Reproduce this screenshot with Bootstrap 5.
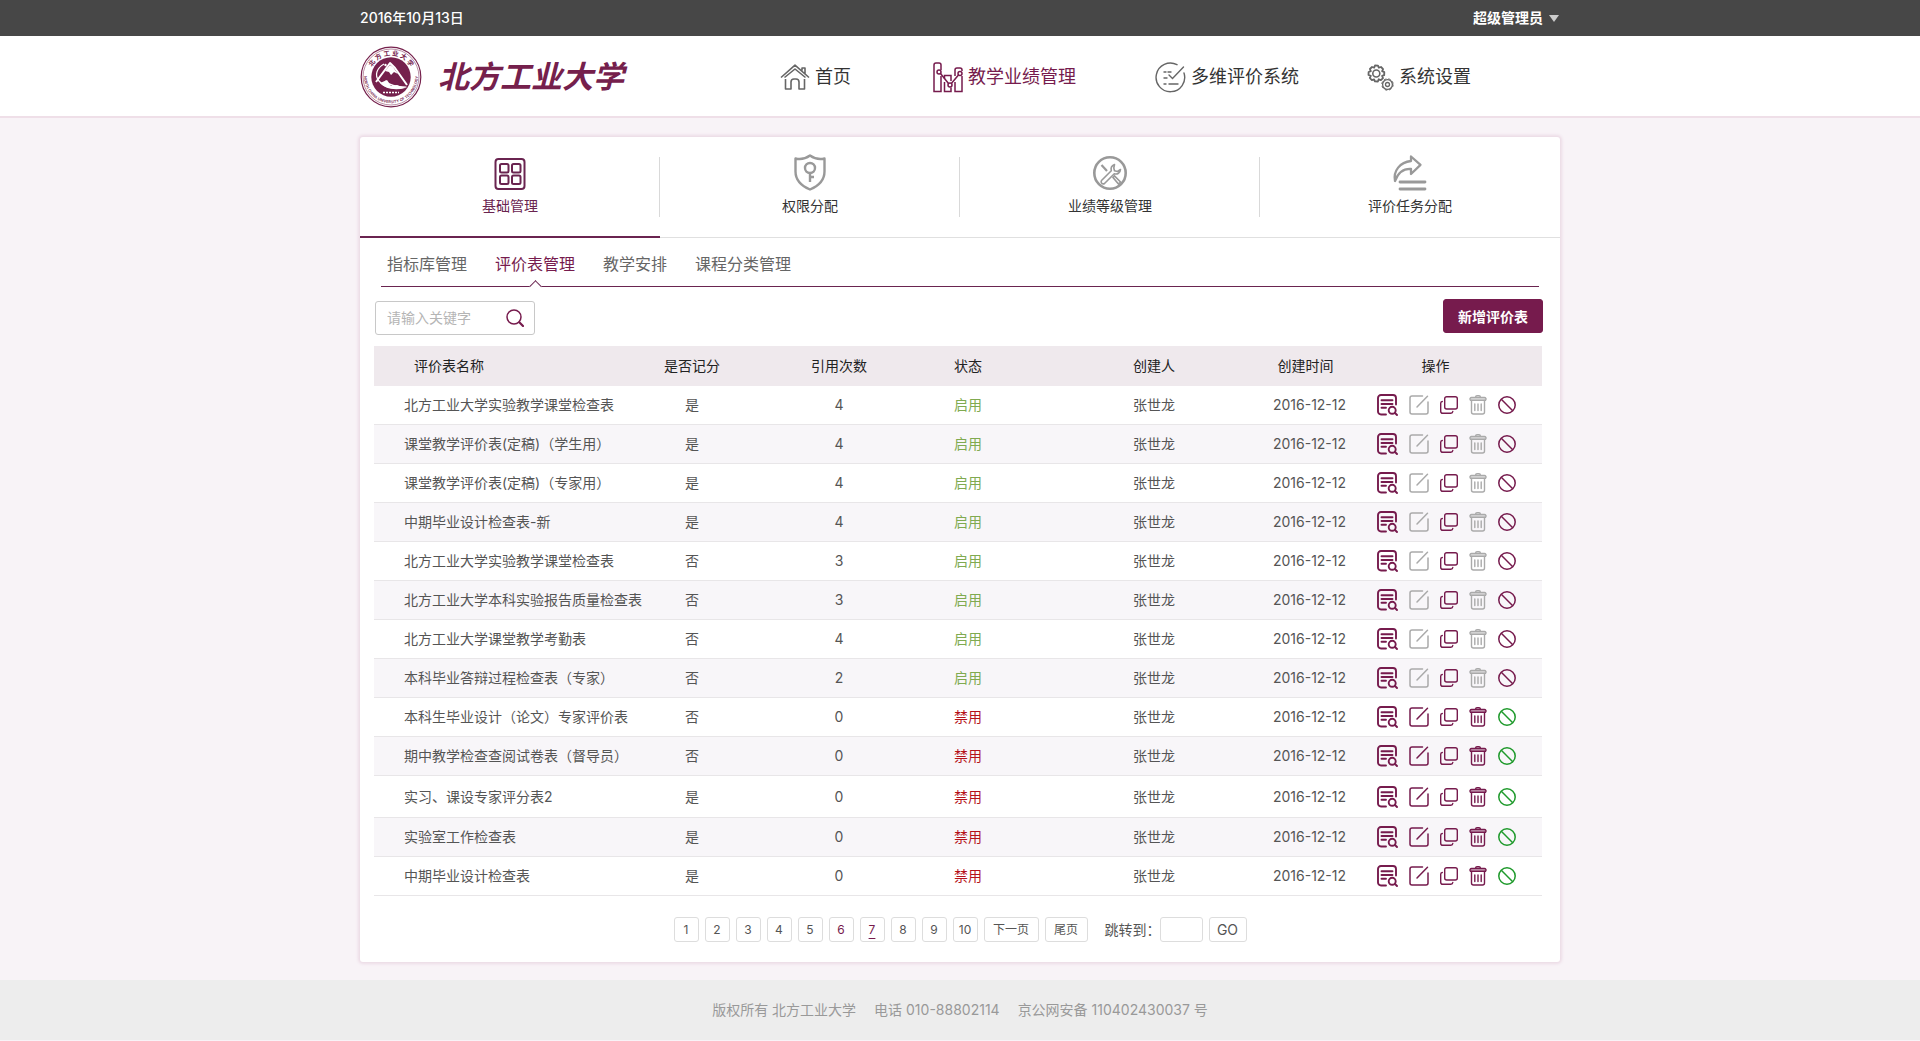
<!DOCTYPE html>
<html lang="zh-CN">
<head>
<meta charset="utf-8">
<meta name="viewport" content="width=device-width, initial-scale=1">
<title>北方工业大学 - 评价表管理</title>
<link rel="stylesheet" href="https://cdn.jsdelivr.net/npm/bootstrap@5.3.0/dist/css/bootstrap.min.css">
<style>
:root{--plum:#761b4d;--plum-dark:#6a2450}
body{font-family:Inter,"Noto Sans CJK SC",sans-serif;font-size:14px;line-height:20px;color:#555;background:#f8f3f7}
a{color:inherit;text-decoration:none}
svg{display:block;flex:none}
.page-wrap{width:100%;max-width:1200px;margin:0 auto}
.top-strip{background:#474747;color:#fff;height:36px;font-weight:500}
.user-menu{color:#fff;font-weight:700;gap:6px;padding-right:1px}
.caret-down{border:5px solid transparent;border-top:7px solid #ccc;border-bottom:0}
.site-head{background:#fff;border-bottom:2px solid #efdfe8;height:82px;padding-top:2px}
.brand-name{font-size:31px;line-height:40px;font-weight:700;font-style:italic;color:#75204c}
.main-nav{display:grid;grid-template-columns:153px 222px 212px 193px;font-size:18px;line-height:26px;color:#333}
.main-nav a{display:flex;align-items:center;gap:5px}
.main-nav .current{color:var(--plum)}
.main-nav svg{color:#666}
.main-nav .current svg{color:var(--plum)}
.page-main{padding-top:19px}
.panel{background:#fff;border-radius:3px;box-shadow:0 0 3px 2px #ecdbe6}
.mod-tabs{border-bottom:1px solid #e0e0e0;height:101px}
.mod-tabs a{color:#333;height:101px;padding-top:16px;position:relative;display:flex;flex-direction:column;align-items:center;gap:5px}
.mod-tabs svg{color:#999}
.mod-tabs a.current,.mod-tabs a.current svg{color:var(--plum-dark)}
.mod-tabs a.current{border-bottom:2px solid var(--plum-dark)}
.mod-tabs a:not(.last-tab)::after{content:"";position:absolute;right:0;top:20px;height:60px;border-right:1px solid #d9d9d9}
.sub-tabs{margin:0 21px;border-bottom:1px solid var(--plum-dark);height:49px;padding:14px 6px 0;gap:28px;font-size:16px;line-height:24px;color:#666}
.sub-tabs a{position:relative;height:34px}
.sub-tabs .current{color:var(--plum)}
.sub-tabs .current::after{content:"";position:absolute;left:50%;bottom:-5px;width:9px;height:9px;margin-left:-4px;background:#fff;border:1px solid var(--plum-dark);border-width:1px 0 0 1px;transform:rotate(45deg)}
.tool-line{padding:12px 17px 11px 15px;height:59px}
.find-box{width:160px;height:34px;border:1px solid #c8c8c8;border-radius:3px;margin-top:2px;padding:0 10px 0 11px}
.find-box input{border:0;outline:0;width:110px;padding:0;color:#555;background:transparent}
.find-box input::placeholder{color:#b5b5b5;opacity:1}
.find-box button,.op-btn{border:0;background:none;padding:0;color:var(--plum)}
.btn-plum{--bs-btn-bg:#761b4d;--bs-btn-border-color:#761b4d;--bs-btn-color:#fff;--bs-btn-hover-bg:#5d123b;--bs-btn-hover-color:#fff;--bs-btn-border-radius:3px;width:100px;height:34px;padding:0;font-size:14px;font-weight:700}
.sheet-box{padding:0 18px 0 14px}
.sheet{table-layout:fixed;border-collapse:separate;border-spacing:0;margin:0;--bs-table-bg:transparent}
.sheet>:not(caption)>*>*{padding:0;vertical-align:middle;white-space:nowrap;box-shadow:none;color:#555;border-bottom:1px solid #e8e6e8;text-align:center}
.sheet>thead>tr>th{background:#efe9ed;border:0;height:40px;font-weight:400;color:#222}
.sheet>tbody>tr>td{height:39px}
.sheet>tbody>tr:nth-child(even){background:#f8f6f9}
.sheet>tbody>tr.row-tall>td{height:42px}
.sheet>tbody>tr>td.col-title{text-align:left;padding-left:30px}
.sheet>thead>tr>th.col-title{text-align:left;padding-left:40px}
.sheet>*>tr>.col-maker{padding-left:82px}
.sheet>tbody>tr>td.col-date{padding-left:8px}
.sheet>thead>tr>th.col-ops{padding-right:48px}
.sheet>tbody>tr>td.is-on{color:#80aa50}
.sheet>tbody>tr>td.is-off{color:#b5121b}
.op-btn.faded{color:#aaa}
.op-btn.go{color:#1f9a2c}
.ops{gap:11px}
.pager{padding:21px 0 20px;gap:6px;font-size:12px;line-height:18px}
.pager a,.pager button,.pager input{min-width:25px;height:25px;border:1px solid #ddd;border-radius:3px;background:#fff;color:#555;display:flex;align-items:center;justify-content:center;padding:0}
.pager .wide{width:43px}
.pager .wider{width:55px}
.pager .go-btn{width:38px;font-size:14px}
.pager label{font-size:14px;margin:0 -7px 0 11px}
.pager .seen{color:var(--plum)}
.pager .ruled{text-decoration:underline;text-underline-offset:4px;text-decoration-thickness:1px}
.foot-bar{background:#ededed;color:#999;min-height:60px;margin-top:18px;gap:18px}
</style>
<script src="https://cdn.jsdelivr.net/npm/bootstrap@5.3.0/dist/js/bootstrap.bundle.min.js"></script>
</head>
<body>
<svg width="0" height="0" class="position-absolute" aria-hidden="true">
  <symbol id="i-doc" viewBox="0 0 21 22"><g fill="none" stroke="currentColor" stroke-width="1.900" stroke-linecap="round"><path d="M9 20.500H4a3 3 0 0 1-3-3V4a3 3 0 0 1 3-3h12a3 3 0 0 1 3 3v6.500M4.500 6.300h11M4.500 10h11M4.500 13.700h4.500"/><circle cx="15.200" cy="16.300" r="3.500"/><path d="m18 19 2 2"/></g></symbol>
  <symbol id="i-edit" viewBox="0 0 20 20"><g fill="none" stroke="currentColor" stroke-width="1.500" stroke-linecap="round"><path d="M13.500 1H3a2 2 0 0 0-2 2v14a2 2 0 0 0 2 2h14a2 2 0 0 0 2-2V7M8 12 18.500 1.200"/></g></symbol>
  <symbol id="i-copy" viewBox="0 0 18 18"><g fill="none" stroke="currentColor" stroke-width="1.400" stroke-linecap="round"><rect x="4.700" y=".7" width="12.600" height="12.300" rx="2"/><path d="M2.300 5.500C1.300 5.600.7 6.200.7 7.200v8c0 1.300.8 2.100 2.100 2.100h8c1.200 0 1.900-.6 2-1.800"/></g></symbol>
  <symbol id="i-bin" viewBox="0 0 18 20"><g fill="none" stroke="currentColor" stroke-width="1.400" stroke-linecap="round"><path d="M6.500 2.300Q6.700.8 8 .8h2q1.300 0 1.500 1.500"/><path d="M1.500 5.200c-1.200-1.500 0-2.700 1-2.700h13c1 0 2.200 1.200 1 2.700z" fill="currentColor" fill-opacity=".35"/><path d="M2.500 5.500V17a2 2 0 0 0 2 2h9a2 2 0 0 0 2-2V5.500M5.800 9v6.500M9 9v6.500M12.200 9v6.500"/></g></symbol>
  <symbol id="i-ban" viewBox="0 0 18 18"><g fill="none" stroke="currentColor" stroke-width="1.500"><circle cx="9" cy="9" r="8.200"/><path d="m3.300 3.300 11.400 11.400"/></g></symbol>
</svg>

<div class="top-strip">
  <div class="page-wrap d-flex align-items-center justify-content-between h-100">
    <time datetime="2016-10-13">2016年10月13日</time>
    <a href="#" class="user-menu d-flex align-items-center">超级管理员<span class="caret-down"></span></a>
  </div>
</div>

<header class="site-head">
  <div class="page-wrap d-flex align-items-center justify-content-between h-100">
    <a href="#" class="d-flex align-items-center gap-3">
      <svg width="62" height="62" viewBox="0 0 62 62" role="img" aria-label="校徽">
        <defs><path id="arcTop" d="M9.500 31a21.500 21.500 0 0 1 43 0"/><path id="arcLow" d="M4.500 25a27 27 0 1 0 53 0"/></defs>
        <circle cx="31" cy="31" r="29.800" fill="#fff" stroke="#75204c" stroke-width="1.200"/>
        <circle cx="31" cy="31" r="28" fill="none" stroke="#75204c" stroke-width=".5"/>
        <circle cx="31" cy="31" r="19.700" fill="#75204c"/>
        <text font-size="6.500" font-weight="700" fill="#75204c" text-anchor="middle"><textPath href="#arcTop" startOffset="50%">北 方 工 业 大 学</textPath></text>
        <text font-size="3.800" font-weight="600" fill="#75204c" text-anchor="middle"><textPath href="#arcLow" startOffset="50%">NORTH CHINA UNIVERSITY OF TECHNOLOGY</textPath></text>
        <g fill="none" stroke="#fff" stroke-linejoin="round"><path d="m16 36 14-19 5 5 12 17" stroke-width="2"/><path d="m25 25 5-6 3 2 5 7-4-2-3 3-2-3z" fill="#fff" stroke="none"/><path d="M24 18c-7 4-10 11-5 17 6 7 17 9 27 6-8 0-16-1-21-6" stroke-width="1.200"/><path d="M20 37c4 5 14 8 25 5l-8-3-6 1-4-6z" fill="#fff" stroke="none"/></g>
        <circle cx="25.500" cy="19" r="1.200" fill="#fff"/>
        <path d="M23 46.500h16" stroke="#fff" stroke-width="1.600" stroke-dasharray="2 1"/>
      </svg>
      <span class="brand-name">北方工业大学</span>
    </a>
    <nav class="main-nav" aria-label="主导航">
      <a href="#"><svg width="30" height="26" viewBox="0 0 30 26" fill="none" stroke="currentColor" stroke-width="1.600" stroke-linejoin="round"><path d="M1 13.500 15 1.200 29 13.500M4.500 13.500 15 5l10.500 8.500M22 6.500V4h3v5.500M5.500 15v10H11v-7a3 3 0 0 1 3-3h2a3 3 0 0 1 3 3v7h5.500V15"/></svg>首页</a>
      <a href="#" class="current" aria-current="page"><svg width="30" height="31" viewBox="0 0 30 31" fill="none" stroke="currentColor" stroke-width="1.500"><path d="M8 14v15.500H1V3a2 2 0 0 1 2-2h3a2 2 0 0 1 2 2v5M18 19v-5.500h-6.500v3M11.500 20v9.500H18V25.500M22 14V8q0-2 2-2h3q2 0 2 2v1M29 14v15.500h-7V20"/><circle cx="6" cy="10" r="2"/><circle cx="17" cy="23" r="2"/><circle cx="27" cy="11.500" r="2"/><path d="m7.500 11.500 8 10M18.300 21.500l7.200-8.500"/></svg>教学业绩管理</a>
      <a href="#"><svg width="31" height="31" viewBox="0 0 31 31" fill="none" stroke="currentColor" stroke-width="1.400" stroke-linecap="round"><path d="M22 2.700A14.300 14.300 0 1 0 29 11"/><path d="m14 13 3.500 3.500L28.500 5M9 10h2M13 10h3M9 16h3M9 22h2M14 22h9"/></svg>多维评价系统</a>
      <a href="#"><svg width="27" height="27" viewBox="0 0 27 27" fill="none" stroke="currentColor" stroke-linejoin="round"><path stroke-width="1.800" d="m8 1.500 3 .1.800 2.100 2.200-.7 2.100 2.100-1 2 2.200 1-.1 3-2.100.8.900 2.200-2.100 2.100-2.200-.9-.8 2.200-3-.1-.8-2-2.200.8L2.800 14l1-2.100L1.500 11l.1-3 2.200-.8-.9-2.200L5 3l2.200.7z"/><circle cx="9.300" cy="9.500" r="3.500" stroke-width="1.600"/><circle cx="20.500" cy="20.500" r="4.900" stroke-width="1.300"/><circle cx="20.500" cy="20.500" r="5.700" stroke-width="1" stroke-dasharray="2.500 2"/><circle cx="20.500" cy="20.500" r="2" stroke-width="1.300"/></svg>系统设置</a>
    </nav>
  </div>
</header>

<main class="page-wrap page-main">
  <section class="panel">
    <nav class="mod-tabs row g-0" aria-label="模块">
      <div class="col-3"><a href="#" class="current"><svg width="36" height="38" viewBox="0 0 36 38" fill="none" stroke="currentColor" stroke-width="2"><rect x="3.500" y="6" width="29" height="30" rx="3"/><rect x="8" y="11" width="8.500" height="8.500" rx="1.500"/><rect x="20" y="11" width="8.500" height="8.500" rx="1.500"/><rect x="8" y="22.500" width="8.500" height="8.500" rx="1.500"/><rect x="20" y="22.500" width="8.500" height="8.500" rx="1.500"/></svg>基础管理</a></div>
      <div class="col-3"><a href="#"><svg width="36" height="38" viewBox="0 0 36 38" fill="none" stroke="currentColor" stroke-width="2.400" stroke-linejoin="round"><path d="M18 2.500Q11 7.500 3.500 5.500v13C3.500 27 8.500 32.500 18 36.500 27.500 32.500 32.500 27 32.500 18.500v-13Q25 7.500 18 2.500z"/><circle cx="18" cy="15" r="5"/><path d="M18 20v9M18 24h4"/></svg>权限分配</a></div>
      <div class="col-3"><a href="#"><svg width="36" height="38" viewBox="0 0 36 38" fill="none" stroke="currentColor"><circle cx="18" cy="20" r="15.700" stroke-width="2.600"/><path stroke-width="1.600" stroke-linejoin="round" d="M22.500 11.500c-3 1.200-3.800 3.800-3.200 6.200L9.500 27.500c-1.300 2 1 4.300 3 3l9.800-9.800c3 1 6-.7 6.200-4.200l-3 2-3-.7-.7-2.800z"/><path stroke-width="1.600" d="m21 24.500 1.500-1.500 6 6-2 2z"/><path stroke-width="2.200" d="m9.500 12 5.500 6"/></svg>业绩等级管理</a></div>
      <div class="col-3"><a href="#" class="last-tab"><svg width="36" height="38" viewBox="0 0 36 38" fill="none" stroke="currentColor" stroke-width="2.300" stroke-linejoin="round" stroke-linecap="round"><path d="M3 28C1 18 8 9 19 8V3.500l9.500 8.300L19 21v-5C11 15.500 6 20 3 28z"/><path d="M8 29h25M8 36h25" stroke-width="2.800"/></svg>评价任务分配</a></div>
    </nav>

    <nav class="sub-tabs d-flex" aria-label="基础管理">
      <a href="#">指标库管理</a><a href="#" class="current" aria-current="page">评价表管理</a><a href="#">教学安排</a><a href="#">课程分类管理</a>
    </nav>

    <div class="tool-line d-flex justify-content-between align-items-start">
      <form class="find-box d-flex align-items-center justify-content-between">
        <input type="text" aria-label="请输入关键字" placeholder="请输入关键字">
        <button type="button" aria-label="搜索"><svg width="18" height="18" viewBox="0 0 18 18" fill="none" stroke="currentColor" stroke-width="1.500"><circle cx="8" cy="8" r="7"/><path d="m13.300 13.300 3.700 3.700" stroke-width="2.200" stroke-linecap="round"/></svg></button>
      </form>
      <button type="button" class="btn btn-plum">新增评价表</button>
    </div>

    <div class="sheet-box">
      <table class="table sheet">
        <colgroup><col style="width:276px"><col style="width:84px"><col style="width:210px"><col style="width:48px"><col style="width:242px"><col style="width:143px"><col></colgroup>
        <thead><tr><th scope="col" class="col-title">评价表名称</th><th scope="col">是否记分</th><th scope="col">引用次数</th><th scope="col">状态</th><th scope="col" class="col-maker">创建人</th><th scope="col">创建时间</th><th scope="col" class="col-ops">操作</th></tr></thead>
        <tbody id="sheetRows"></tbody>
      </table>
    </div>

    <nav class="pager d-flex justify-content-center align-items-center" aria-label="分页">
      <a href="#">1</a><a href="#">2</a><a href="#">3</a><a href="#">4</a><a href="#">5</a><a href="#" class="seen">6</a><a href="#" class="seen ruled">7</a><a href="#">8</a><a href="#">9</a><a href="#">10</a><a href="#" class="wider">下一页</a><a href="#" class="wide">尾页</a>
      <label for="pageNo">跳转到：</label><input id="pageNo" type="text" class="wide"><button type="button" class="go-btn">GO</button>
    </nav>
  </section>
</main>

<footer class="foot-bar d-flex justify-content-center align-items-center">
  <span>版权所有 北方工业大学</span><span>电话 010-88802114</span><span>京公网安备 110402430037 号</span>
</footer>

<script>
const forms = [
  ['北方工业大学实验教学课堂检查表', '是', 4, true],
  ['课堂教学评价表(定稿)（学生用）', '是', 4, true],
  ['课堂教学评价表(定稿)（专家用）', '是', 4, true],
  ['中期毕业设计检查表-新', '是', 4, true],
  ['北方工业大学实验教学课堂检查表', '否', 3, true],
  ['北方工业大学本科实验报告质量检查表', '否', 3, true],
  ['北方工业大学课堂教学考勤表', '否', 4, true],
  ['本科毕业答辩过程检查表（专家）', '否', 2, true],
  ['本科生毕业设计（论文）专家评价表', '否', 0, false],
  ['期中教学检查查阅试卷表（督导员）', '否', 0, false],
  ['实习、课设专家评分表2', '是', 0, false],
  ['实验室工作检查表', '是', 0, false],
  ['中期毕业设计检查表', '是', 0, false]
];
const op = (icon, w, h, label, cls) =>
  `<button type="button" class="op-btn ${cls}" aria-label="${label}"><svg width="${w}" height="${h}"><use href="#i-${icon}"/></svg></button>`;
document.getElementById('sheetRows').innerHTML = forms.map(([name, scored, used, on], i) => `
  <tr class="${i === 10 ? 'row-tall' : ''}">
    <td class="col-title">${name}</td><td>${scored}</td><td>${used}</td>
    <td class="${on ? 'is-on' : 'is-off'}">${on ? '启用' : '禁用'}</td>
    <td class="col-maker">张世龙</td><td class="col-date">2016-12-12</td>
    <td><div class="ops d-flex align-items-center">
      ${op('doc', 21, 22, '查看', '')}${op('edit', 20, 20, '编辑', on ? 'faded' : '')}${op('copy', 18, 18, '复制', '')}${op('bin', 18, 20, '删除', on ? 'faded' : '')}${op('ban', 18, 18, on ? '禁用' : '启用', on ? '' : 'go')}
    </div></td>
  </tr>`).join('');
</script>
</body>
</html>
